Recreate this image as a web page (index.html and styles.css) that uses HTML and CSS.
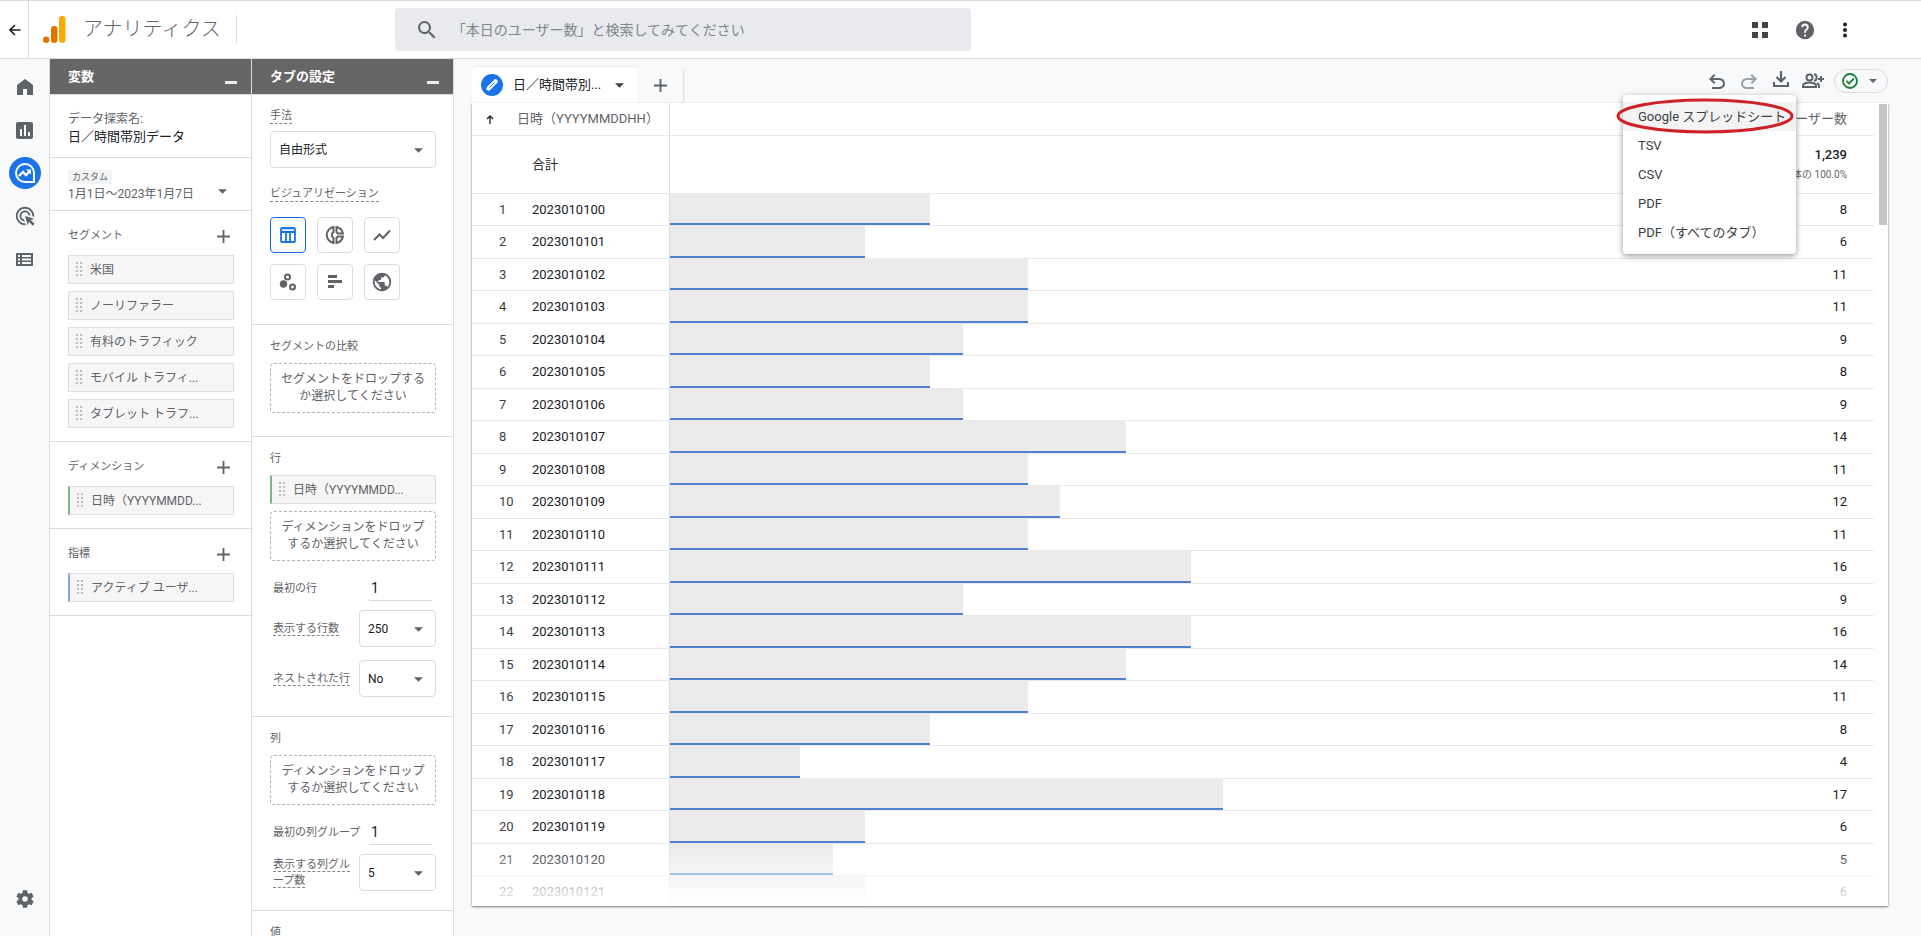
FILE: index.html
```html
<!DOCTYPE html>
<html lang="ja">
<head>
<meta charset="utf-8">
<title>アナリティクス</title>
<link rel="stylesheet" href="styles.css">
</head>
<body>
<svg class="defs" aria-hidden="true">
  <symbol id="caret" viewBox="0 0 10 5"><path d="M0 0h10L5 5z"/></symbol>
  <symbol id="plus" viewBox="0 0 14 14"><path d="M6 0h2v6h6v2H8v6H6V8H0V6h6z"/></symbol>
  <symbol id="grip" viewBox="0 0 6 15"><path d="M0 0h2v2H0zM4 0h2v2H4zM0 4h2v2H0zM4 4h2v2H4zM0 8h2v2H0zM4 8h2v2H4zM0 12h2v2H0zM4 12h2v2H4z"/></symbol>
</svg>

<header class="topbar">
  <button class="back" aria-label="戻る"><svg width="12" height="12" viewBox="0 0 12 12" fill="none" stroke="#202124" stroke-width="1.6"><path d="M11.5 6H1.500M6 1L1 6l5 5"/></svg></button>
  <div class="brand">
    <svg width="23" height="28" viewBox="0 0 23 28"><circle cx="3.200" cy="23.800" r="3.200" fill="#e37400"/><rect x="8" y="10" width="6.500" height="17" rx="3.200" fill="#e37400"/><rect x="16" y="0" width="6.500" height="27" rx="3.200" fill="#f9ab00"/></svg>
    <span class="brand-name">アナリティクス</span>
  </div>
  <label class="search">
    <svg width="24" height="24" viewBox="0 0 24 24" fill="#5f6368"><path d="M15.500 14h-.79l-.28-.27A6.470 6.470 0 0 0 16 9.500 6.500 6.500 0 1 0 9.500 16c1.610 0 3.090-.59 4.230-1.570l.27.28v.79l5 4.990L20.490 19l-4.990-5zm-6 0C7.010 14 5 11.990 5 9.500S7.010 5 9.500 5 14 7.010 14 9.500 11.990 14 9.500 14z"/></svg>
    <input type="search" aria-label="検索" placeholder="「本日のユーザー数」と検索してみてください">
  </label>
  <nav class="top-actions" aria-label="ツール">
    <button aria-label="アプリ"><svg width="16" height="16" viewBox="0 0 16 16" fill="#444"><path d="M0 0h6v6H0zM10 0h6v6h-6zM0 10h6v6H0zM10 10h6v6h-6z"/></svg></button>
    <button aria-label="ヘルプ"><svg width="22" height="22" viewBox="0 0 24 24" fill="#5f6368"><path d="M12 2a10 10 0 1 0 0 20 10 10 0 0 0 0-20zm1 17h-2v-2h2v2zm2.070-7.750-.9.920C13.450 12.900 13 13.500 13 15h-2v-.5c0-1.100.45-2.100 1.170-2.830l1.240-1.260c.37-.36.59-.86.59-1.410a2 2 0 0 0-4 0H8a4 4 0 0 1 8 0c0 .88-.36 1.680-.93 2.250z"/></svg></button>
    <button aria-label="その他"><svg width="6" height="16" viewBox="0 0 6 16" fill="#202124"><circle cx="3" cy="2.500" r="2"/><circle cx="3" cy="8" r="2"/><circle cx="3" cy="13.500" r="2"/></svg></button>
  </nav>
</header>

<div class="shell">
  <nav class="rail" aria-label="メイン">
    <a href="#" aria-label="ホーム"><svg width="16" height="16" viewBox="0 0 16 16"><path d="M0 16V6l8-6 8 6v10h-6v-6H6v6z"/></svg></a>
    <a href="#" aria-label="レポート"><svg width="17" height="17" viewBox="0 0 17 17"><path fill-rule="evenodd" d="M2 0h13a2 2 0 0 1 2 2v13a2 2 0 0 1-2 2H2a2 2 0 0 1-2-2V2a2 2 0 0 1 2-2zm2 7v7h2V7zm4-4v11h2V3zm4 7v4h2v-4z"/></svg></a>
    <a href="#" class="active" aria-label="探索"><svg width="20" height="20" viewBox="0 0 20 20"><path d="M10 1a9 9 0 1 0 0 18h9v-9a9 9 0 0 0-9-9z" fill="none" stroke="#fff" stroke-width="2"/><path d="M4 13l4-4 3 3 4-4" fill="none" stroke="#fff" stroke-width="2.400"/><path d="M11 6.500h5v5z" fill="#fff"/></svg></a>
    <a href="#" aria-label="広告"><svg width="22" height="22" viewBox="0 0 24 24"><path d="M11.710 17.990C8.530 17.840 6 15.220 6 12c0-3.310 2.690-6 6-6 3.220 0 5.840 2.530 5.990 5.710l-2.100-.63C15.480 9.310 13.890 8 12 8c-2.210 0-4 1.790-4 4 0 1.890 1.310 3.480 3.080 3.890l.63 2.100zM22 12c0 .3-.01.6-.04.9l-1.970-.59c.01-.1.01-.21.01-.31 0-4.420-3.580-8-8-8s-8 3.580-8 8 3.580 8 8 8c.1 0 .21 0 .31-.01l.59 1.970c-.3.03-.6.04-.9.04-5.520 0-10-4.480-10-10S6.480 2 12 2s10 4.480 10 10zm-3.770 4.260L22 15l-10-3 3 10 1.260-3.770 4.270 4.270 1.980-1.980-4.280-4.260z"/></svg></a>
    <a href="#" aria-label="設定一覧"><svg width="17" height="13" viewBox="0 0 17 13"><path fill-rule="evenodd" d="M0 0h17v13H0zM2 2v2h2V2zm4 0v2h9V2zM2 5.500v2h2v-2zm4 0v2h9v-2zM2 9v2h2V9zm4 0v2h9V9z"/></svg></a>
    <a href="#" class="admin" aria-label="管理"><svg width="22" height="22" viewBox="0 0 24 24"><path d="M19.140 12.940c.04-.3.06-.61.06-.94 0-.32-.02-.64-.07-.94l2.030-1.580c.18-.14.23-.41.12-.61l-1.920-3.320c-.12-.22-.37-.29-.59-.22l-2.390.96c-.5-.38-1.030-.7-1.620-.94l-.36-2.540c-.04-.24-.24-.41-.48-.41h-3.840c-.24 0-.43.17-.47.41l-.36 2.540c-.59.24-1.130.57-1.620.94l-2.390-.96c-.22-.08-.47 0-.59.22L2.740 8.870c-.12.21-.08.47.12.61l2.030 1.580c-.05.3-.09.63-.09.94s.02.64.07.94l-2.030 1.580c-.18.14-.23.41-.12.61l1.920 3.320c.12.22.37.29.59.22l2.390-.96c.5.38 1.030.7 1.620.94l.36 2.540c.05.24.24.41.48.41h3.840c.24 0 .44-.17.47-.41l.36-2.540c.59-.24 1.130-.56 1.620-.94l2.390.96c.22.08.47 0 .59-.22l1.920-3.320c.12-.22.07-.47-.12-.61l-2.010-1.580zM12 15a3 3 0 1 1 0-6 3 3 0 0 1 0 6z"/></svg></a>
  </nav>

  <section class="panel">
    <div class="panel-head"><h2>変数</h2><button class="minimize" aria-label="変数を最小化"></button></div>
    <div class="block name-block">
      <div class="muted">データ探索名:</div>
      <div class="name">日／時間帯別データ</div>
    </div>
    <button class="block date-block">
      <span class="date-text"><span class="tag">カスタム</span><span>1月1日～2023年1月7日</span></span>
      <svg class="caret"><use href="#caret"/></svg>
    </button>
    <div class="block list-block">
      <div class="list-head"><h3>セグメント</h3><button aria-label="セグメントを追加"><svg class="plus"><use href="#plus"/></svg></button></div>
      <div class="chips">
        <button class="chip"><svg class="grip"><use href="#grip"/></svg>米国</button>
        <button class="chip"><svg class="grip"><use href="#grip"/></svg>ノーリファラー</button>
        <button class="chip"><svg class="grip"><use href="#grip"/></svg>有料のトラフィック</button>
        <button class="chip"><svg class="grip"><use href="#grip"/></svg>モバイル トラフィ...</button>
        <button class="chip"><svg class="grip"><use href="#grip"/></svg>タブレット トラフ...</button>
      </div>
    </div>
    <div class="block list-block">
      <div class="list-head"><h3>ディメンション</h3><button aria-label="ディメンションを追加"><svg class="plus"><use href="#plus"/></svg></button></div>
      <div class="chips"><button class="chip dimension"><svg class="grip"><use href="#grip"/></svg>日時（YYYYMMDD...</button></div>
    </div>
    <div class="block list-block">
      <div class="list-head"><h3>指標</h3><button aria-label="指標を追加"><svg class="plus"><use href="#plus"/></svg></button></div>
      <div class="chips"><button class="chip metric"><svg class="grip"><use href="#grip"/></svg>アクティブ ユーザ...</button></div>
    </div>
  </section>

  <section class="panel">
    <div class="panel-head"><h2>タブの設定</h2><button class="minimize" aria-label="タブの設定を最小化"></button></div>
    <div class="block setting technique">
      <label class="hint" for="technique">手法</label>
      <div class="select"><select id="technique"><option>自由形式</option></select><svg class="caret"><use href="#caret"/></svg></div>
      <h3 class="hint viz-title">ビジュアリゼーション</h3>
      <div class="viz">
        <button class="selected" aria-label="テーブル"><svg width="18" height="18" viewBox="0 0 18 18" fill="none" stroke="#1a73e8" stroke-width="1.800"><rect x="2" y="2" width="14" height="14" rx="1"/><path fill="#d2e3fc" stroke="none" d="M3 3h12v2H3z"/><path d="M2 6h14M7 6v10M11 6v10"/></svg></button>
        <button aria-label="ドーナツ グラフ"><svg width="20" height="20" viewBox="0 0 20 20" fill="none" stroke="#5f6368" stroke-width="2"><path d="M8.500 2.100a8 8 0 0 0 0 15.800v-5a3.300 3.300 0 0 1 0-5.800zM11.500 2.100a8 8 0 0 1 6.400 6.400h-5l-1.400-1.400zM11.500 17.900a8 8 0 0 0 6.400-6.400h-5l-1.400 1.400z"/></svg></button>
        <button aria-label="折れ線グラフ"><svg width="18" height="12" viewBox="0 0 18 12" fill="none" stroke="#5f6368" stroke-width="2"><path d="M1 11l5.500-5.500 3.500 3.500L17 1.500"/></svg></button>
        <button aria-label="散布図"><svg width="18" height="18" viewBox="0 0 18 18" fill="none" stroke="#5f6368" stroke-width="2"><circle cx="4.500" cy="11" r="3.700" fill="#5f6368" stroke="none"/><circle cx="8.500" cy="4" r="2.500"/><circle cx="13.500" cy="14" r="2.500"/></svg></button>
        <button aria-label="棒グラフ"><svg width="14" height="14" viewBox="0 0 14 14" fill="#5f6368"><path d="M0 0h9v3H0zM0 5h14v3H0zM0 10h6v3H0z"/></svg></button>
        <button aria-label="地図"><svg width="22" height="22" viewBox="0 0 24 24" fill="#5f6368"><path d="M12 2C6.480 2 2 6.480 2 12s4.480 10 10 10 10-4.480 10-10S17.520 2 12 2zm-1 17.930c-3.950-.49-7-3.850-7-7.930 0-.62.08-1.210.21-1.790L9 15v1c0 1.100.9 2 2 2v1.930zm6.900-2.540c-.26-.81-1-1.390-1.900-1.390h-1v-3c0-.55-.45-1-1-1H8v-2h2c.55 0 1-.45 1-1V7h2c1.100 0 2-.9 2-2v-.41c2.930 1.190 5 4.060 5 7.410 0 2.080-.8 3.970-2.100 5.390z"/></svg></button>
      </div>
    </div>
    <div class="block setting compare">
      <h3>セグメントの比較</h3>
      <button class="drop">セグメントをドロップするか選択してください</button>
    </div>
    <div class="block setting">
      <h3>行</h3>
      <button class="chip dimension"><svg class="grip"><use href="#grip"/></svg>日時（YYYYMMDD...</button>
      <button class="drop">ディメンションをドロップするか選択してください</button>
      <div class="field number"><label for="row-start">最初の行</label><input id="row-start" type="text" value="1"></div>
      <div class="field"><label for="row-count"><span class="hint">表示する行数</span></label><div class="select"><select id="row-count"><option>250</option></select><svg class="caret"><use href="#caret"/></svg></div></div>
      <div class="field nested"><label for="nested"><span class="hint">ネストされた行</span></label><div class="select"><select id="nested"><option>No</option></select><svg class="caret"><use href="#caret"/></svg></div></div>
    </div>
    <div class="block setting">
      <h3>列</h3>
      <button class="drop">ディメンションをドロップするか選択してください</button>
      <div class="field number"><label for="col-start">最初の列グループ</label><input id="col-start" type="text" value="1"></div>
      <div class="field"><label for="col-count"><span class="hint">表示する列グループ数</span></label><div class="select"><select id="col-count"><option>5</option></select><svg class="caret"><use href="#caret"/></svg></div></div>
    </div>
    <div class="block setting"><h3>値</h3></div>
  </section>

  <main class="canvas">
    <div class="tabbar">
      <button class="tab"><svg width="22" height="22" viewBox="0 0 22 22"><circle cx="11" cy="11" r="11" fill="#1a73e8"/><path d="M7.500 14.500l7-7" stroke="#fff" stroke-width="4.500" stroke-linecap="round"/><path d="M8.500 13.500l5-5" stroke="#1a73e8" stroke-width="1"/></svg><span>日／時間帯別...</span><svg class="caret dark"><use href="#caret"/></svg></button>
      <button class="tab-add" aria-label="タブを追加"><svg class="plus"><use href="#plus"/></svg></button>
      <div class="tools">
        <button aria-label="元に戻す"><svg width="16" height="15" viewBox="4 4 16 15" fill="#5f6368"><path d="M7 19v-2h7.100q1.575 0 2.738-1T18 13.500 16.838 11 14.100 10H7.800l2.600 2.600L9 14 4 9l5-5 1.400 1.400L7.800 8h6.300q2.425 0 4.163 1.575T20 13.500t-1.737 3.925T14.100 19z"/></svg></button>
        <button aria-label="やり直す"><svg width="16" height="15" viewBox="4 4 16 15" fill="#9aa0a6"><path d="M17 19v-2H9.900q-1.575 0-2.738-1T6 13.500 7.162 11 9.900 10h6.300l-2.600 2.600L15 14l5-5-5-5-1.400 1.400L16.200 8H9.900Q7.475 8 5.737 9.575T4 13.500t1.737 3.925T9.900 19z"/></svg></button>
        <div class="export">
          <button aria-label="データをエクスポート" aria-expanded="true"><svg width="16" height="16" viewBox="0 0 16 16" fill="none" stroke="#5f6368" stroke-width="2.200"><path d="M8 0v10M3.500 6L8 10.500 12.500 6M1 11v4h14v-4"/></svg></button>
          <ul class="menu">
            <li><button class="hover">Google スプレッドシート</button></li>
            <li><button>TSV</button></li>
            <li><button>CSV</button></li>
            <li><button>PDF</button></li>
            <li><button>PDF（すべてのタブ）</button></li>
          </ul>
          <svg class="ring" viewBox="0 0 178 36"><ellipse cx="89" cy="18" rx="87" ry="16"/></svg>
        </div>
        <button aria-label="共有"><svg width="22" height="16" viewBox="0 0 22 16" fill="none" stroke="#5f6368" stroke-width="2"><circle cx="7.500" cy="4.500" r="3"/><path d="M1 14v-1.500c0-2 4-3 6.500-3s6.500 1 6.500 3V14zM12 1.200c3.500 0 3.500 6.500 0 6.500M15 10q2 1 2 3v2M19 3v6M16 6h6"/></svg></button>
        <button class="status" aria-label="データの状態"><svg width="16" height="16" viewBox="0 0 16 16" fill="none" stroke="#188038" stroke-width="1.800"><circle cx="8" cy="8" r="7"/><path d="M4.500 8l2.500 2.500 5-5"/></svg><svg class="caret small"><use href="#caret"/></svg></button>
      </div>
    </div>
    <div class="card">
      <table>
        <colgroup><col class="c-no"><col class="c-date"><col></colgroup>
        <thead>
          <tr><th><svg width="8" height="9" viewBox="0 0 8 9" fill="none" stroke="#202124" stroke-width="1.300"><path d="M4 9V1M1 4l3-3 3 3"/></svg></th><th>日時（YYYYMMDDHH）</th><th class="value-head">アクティブ ユーザー数</th></tr>
          <tr class="total"><td></td><td>合計</td><td><strong>1,239</strong><small>全体の 100.0%</small></td></tr>
        </thead>
        <tbody>
          <tr><td>1</td><td>2023010100</td><td><div class="cell"><i style="--v:8"></i><span>8</span></div></td></tr>
          <tr><td>2</td><td>2023010101</td><td><div class="cell"><i style="--v:6"></i><span>6</span></div></td></tr>
          <tr><td>3</td><td>2023010102</td><td><div class="cell"><i style="--v:11"></i><span>11</span></div></td></tr>
          <tr><td>4</td><td>2023010103</td><td><div class="cell"><i style="--v:11"></i><span>11</span></div></td></tr>
          <tr><td>5</td><td>2023010104</td><td><div class="cell"><i style="--v:9"></i><span>9</span></div></td></tr>
          <tr><td>6</td><td>2023010105</td><td><div class="cell"><i style="--v:8"></i><span>8</span></div></td></tr>
          <tr><td>7</td><td>2023010106</td><td><div class="cell"><i style="--v:9"></i><span>9</span></div></td></tr>
          <tr><td>8</td><td>2023010107</td><td><div class="cell"><i style="--v:14"></i><span>14</span></div></td></tr>
          <tr><td>9</td><td>2023010108</td><td><div class="cell"><i style="--v:11"></i><span>11</span></div></td></tr>
          <tr><td>10</td><td>2023010109</td><td><div class="cell"><i style="--v:12"></i><span>12</span></div></td></tr>
          <tr><td>11</td><td>2023010110</td><td><div class="cell"><i style="--v:11"></i><span>11</span></div></td></tr>
          <tr><td>12</td><td>2023010111</td><td><div class="cell"><i style="--v:16"></i><span>16</span></div></td></tr>
          <tr><td>13</td><td>2023010112</td><td><div class="cell"><i style="--v:9"></i><span>9</span></div></td></tr>
          <tr><td>14</td><td>2023010113</td><td><div class="cell"><i style="--v:16"></i><span>16</span></div></td></tr>
          <tr><td>15</td><td>2023010114</td><td><div class="cell"><i style="--v:14"></i><span>14</span></div></td></tr>
          <tr><td>16</td><td>2023010115</td><td><div class="cell"><i style="--v:11"></i><span>11</span></div></td></tr>
          <tr><td>17</td><td>2023010116</td><td><div class="cell"><i style="--v:8"></i><span>8</span></div></td></tr>
          <tr><td>18</td><td>2023010117</td><td><div class="cell"><i style="--v:4"></i><span>4</span></div></td></tr>
          <tr><td>19</td><td>2023010118</td><td><div class="cell"><i style="--v:17"></i><span>17</span></div></td></tr>
          <tr><td>20</td><td>2023010119</td><td><div class="cell"><i style="--v:6"></i><span>6</span></div></td></tr>
          <tr><td>21</td><td>2023010120</td><td><div class="cell"><i style="--v:5"></i><span>5</span></div></td></tr>
          <tr><td>22</td><td>2023010121</td><td><div class="cell"><i style="--v:6"></i><span>6</span></div></td></tr>
        </tbody>
      </table>
      <div class="scrollbar"></div>
      <div class="fade"></div>
    </div>
  </main>
</div>
</body>
</html>
```
FILE: styles.css
```css
* { box-sizing: border-box; }

body {
  margin: 0;
  height: 100vh;
  display: flex;
  flex-direction: column;
  overflow: hidden;
  background: #fff;
  color: #202124;
  font: 12px/16px Roboto, "Noto Sans CJK JP", sans-serif;
}

button, input, select {
  font: inherit;
  color: inherit;
  background: none;
  border: 0;
  padding: 0;
  margin: 0;
  border-radius: 0;
}

h2, h3 { margin: 0; }
svg { display: block; flex: none; }
.defs { position: absolute; width: 0; height: 0; }
.caret { width: 9px; height: 5px; fill: #5f6368; }
.caret.dark { fill: #3c4043; }
.caret.small { width: 8px; height: 4px; }
.plus { width: 13px; height: 13px; fill: #5f6368; }
.grip { width: 6px; height: 15px; fill: #bdbdbd; }

/* Top bar */
.topbar {
  flex: none;
  display: flex;
  align-items: center;
  height: 59px;
  border-top: 1px solid #dadce0;
  border-bottom: 1px solid #dadce0;
}
.back {
  width: 29px;
  align-self: stretch;
  padding-left: 9px;
  border-right: 1px solid #dadce0;
}
.brand {
  display: flex;
  align-items: center;
  gap: 17px;
  height: 29px;
  margin-left: 14px;
  padding-right: 15px;
  border-right: 1px solid #dadce0;
}
.brand-name { font-size: 20px; line-height: 29px; color: #5f6368; font-weight: 300; }
.search {
  display: flex;
  align-items: center;
  gap: 13px;
  width: 30%;
  height: 43px;
  margin-left: 158px;
  padding: 0 20px;
  border-radius: 4px;
  background: #e8eaed;
}
.search input { flex: 1; font-size: 14px; outline: 0; appearance: none; }
.search input::placeholder { color: #80868b; opacity: 1; }
.top-actions { display: flex; align-items: center; gap: 26px; margin-left: auto; padding-right: 73px; }

/* Left rail */
.shell { flex: 1; display: flex; min-height: 0; background: #f8f9fb; }
.rail {
  flex: none;
  display: flex;
  flex-direction: column;
  align-items: center;
  gap: 11px;
  width: 50px;
  padding: 12px 0 21px;
  border-right: 1px solid #dadce0;
}
.rail a {
  display: grid;
  place-items: center;
  width: 32px;
  height: 32px;
  border-radius: 50%;
}
.rail svg { fill: #5f6368; }
.rail .active { background: #1a73e8; }
.rail .admin { margin-top: auto; }

/* Panels */
.panel {
  flex: none;
  width: 202px;
  overflow: hidden;
  background: #fff;
  border-right: 1px solid #dadce0;
}
.panel-head {
  display: flex;
  justify-content: space-between;
  height: 36px;
  padding: 9px 14px 0 18px;
  background: #666;
  border-bottom: 1px solid #dadce0;
}
.panel-head h2 { color: #fff; font-size: 13px; line-height: 18px; font-weight: 700; }
.minimize { width: 12px; height: 3px; margin-top: 13px; background: #eee; }
.block { width: 100%; padding: 0 17px 0 18px; border-bottom: 1px solid #dadce0; }
.block h3, .block label { font-size: 11px; line-height: 16px; font-weight: 400; color: #5f6368; }

.name-block { padding-top: 15px; padding-bottom: 11px; line-height: 18px; }
.muted { color: #5f6368; }
.name { font-size: 13px; }

.date-block {
  display: flex;
  align-items: center;
  justify-content: space-between;
  height: 53px;
  padding: 12px 24px 9px 18px;
  text-align: left;
  color: #5f6368;
}
.date-text { display: flex; flex-direction: column; align-items: flex-start; gap: 2px; }
.tag { padding: 0 4px; font-size: 9px; line-height: 14px; background: #f1f3f4; }
.date-block .caret { margin-top: 12px; }

.list-block { padding-top: 15px; padding-bottom: 13px; }
.list-head { display: flex; align-items: center; justify-content: space-between; height: 20px; margin-bottom: 9px; padding-right: 4px; }
.chips { display: grid; gap: 7px; }
.chip {
  display: flex;
  align-items: center;
  gap: 8px;
  width: 100%;
  height: 29px;
  padding-left: 7px;
  color: #5f6368;
  background: #f6f6f6;
  border: 1px solid #dfdfdf;
  white-space: nowrap;
}
.chip.dimension { border-left: 2px solid #7cb587; }
.chip.metric { border-left: 2px solid #84a7e0; }

/* Tab settings */
.setting { display: flex; flex-direction: column; align-items: flex-start; padding-top: 14px; padding-bottom: 19px; }
.hint { border-bottom: 1px dashed #80868b; }
.setting > .hint { line-height: 15px; }
.setting h3 { margin-bottom: 8px; }
.select { display: grid; align-items: center; width: 100%; }
.select > * { grid-area: 1 / 1; }
.select select {
  appearance: none;
  height: 37px;
  padding: 0 8px;
  border: 1px solid #dadce0;
  border-radius: 4px;
  outline: 0;
}
.select .caret { justify-self: end; margin-right: 13px; margin-top: 2px; pointer-events: none; }
.technique { padding-top: 13px; padding-bottom: 24px; }
.technique .select { margin-top: 7px; }
.setting .viz-title { margin: 18px 0 15px; }
.viz { display: grid; grid-template-columns: repeat(3, 36px); gap: 11px; }
.viz button { display: grid; place-items: center; height: 36px; border: 1px solid #dadce0; border-radius: 4px; }
.viz .selected { border-color: #1967d2; }
.drop {
  width: 100%;
  height: 50px;
  padding: 0 8px;
  line-height: 17px;
  line-break: anywhere;
  color: #5f6368;
  border: 1px dashed #b0b3b8;
  border-radius: 4px;
}
.compare { padding-bottom: 23px; }
.chip + .drop { margin-top: 7px; }
.field {
  display: grid;
  grid-template-columns: minmax(0, 1fr) 77px;
  gap: 6px;
  align-items: center;
  width: 100%;
  padding-left: 3px;
}
.field label { line-break: anywhere; }
.number { margin: 15px 0 9px; }
.number label { white-space: nowrap; }
.number input {
  width: 63px;
  height: 25px;
  margin-left: 10px;
  padding: 0 2px;
  font-size: 14px;
  border-bottom: 1px solid #dadce0;
  outline: 0;
}
.nested { margin-top: 13px; }

/* Canvas */
.canvas { flex: 1; display: flex; flex-direction: column; min-width: 0; padding: 8px 33px 30px 18px; }
.tabbar { display: flex; align-items: flex-start; height: 36px; }
.tab {
  display: flex;
  align-items: center;
  gap: 10px;
  width: 166px;
  height: 36px;
  padding: 0 14px 0 9px;
  font-size: 13px;
  background: #fff;
  border-radius: 4px 4px 0 0;
  box-shadow: 0 -1px 2px #0001;
}
.tab .caret { margin-left: auto; }
.tab-add {
  display: grid;
  place-items: center;
  width: 45px;
  height: 36px;
  border-radius: 4px;
  box-shadow: 1px 1px 2px #0002;
}
.tools { display: flex; align-items: center; gap: 16px; height: 24px; margin-left: auto; margin-top: 2px; }
.status {
  display: flex;
  align-items: center;
  justify-content: space-between;
  width: 54px;
  height: 24px;
  margin-left: -6px;
  padding: 0 10px 0 7px;
  border: 1px solid #dadce0;
  border-radius: 12px;
}
.export { position: relative; margin-right: -3px; }
.menu {
  position: absolute;
  z-index: 2;
  top: 24px;
  right: -7px;
  width: 173px;
  margin: 0;
  padding: 7px 0;
  list-style: none;
  background: #fff;
  border-radius: 4px;
  box-shadow: 0 2px 6px #0006;
}
.menu button { width: 100%; height: 29px; padding-left: 15px; text-align: left; font-size: 13px; color: #3c4043; }
.menu .hover { background: #f3f3f3; }
.ring {
  position: absolute;
  z-index: 3;
  top: 27px;
  right: -5px;
  width: 178px;
  height: 36px;
  fill: none;
  stroke: #cf2027;
  stroke-width: 3;
  pointer-events: none;
}
.card {
  position: relative;
  flex: 1;
  min-height: 0;
  overflow: hidden;
  padding-right: 14px;
  background: #fff;
  box-shadow: 0 1px 2px #0008;
}
table { width: 100%; table-layout: fixed; border-spacing: 0; font-size: 13px; }
.c-no { width: 45px; }
.c-date { width: 152px; }
th, td { padding: 0; text-align: left; font-weight: 400; border-bottom: 1px solid #e8eaed; }
th { height: 33px; color: #5f6368; }
th:first-child { padding-left: 14px; }
th:nth-child(3), td:nth-child(3) { border-left: 1px solid #dadce0; }
th.value-head { text-align: right; padding-right: 27px; }
.total td { height: 58px; }
.total td:last-child { text-align: right; padding-right: 27px; }
.total strong { display: block; font-weight: 500; line-height: 20px; }
.total small { display: block; font-size: 10px; line-height: 20px; color: #5f6368; }
td:nth-child(2) { padding-left: 15px; }
tbody td { height: 32px; }
tbody tr:nth-child(even) td { height: 33px; }
tbody td:first-child { padding-left: 27px; color: #3c4043; }
.cell { display: flex; align-items: center; height: 31px; }
tr:nth-child(even) .cell { height: 32px; }
.cell i { width: calc(var(--v) / 37 * 100%); height: 100%; background: #ebebeb; border-bottom: 2px solid #5080d0; }
.cell span { margin-left: auto; padding-right: 27px; }
.scrollbar { position: absolute; top: 1px; right: 1px; width: 8px; height: 121px; background: #c6c6c6; }
.fade { position: absolute; left: 0; right: 0; bottom: 0; height: 64px; background: linear-gradient(#fff0, #fff); }
```
